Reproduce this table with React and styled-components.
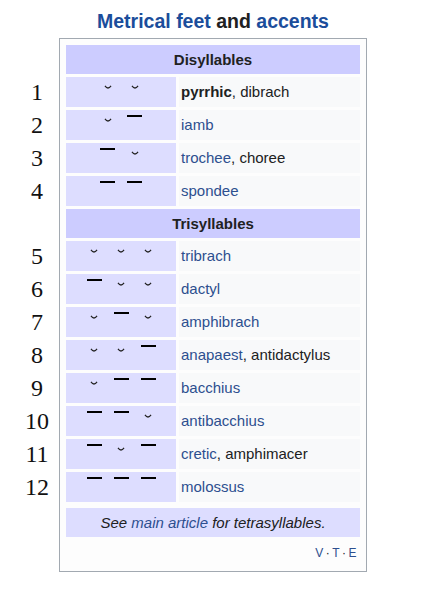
import React from 'react';
import styled, { createGlobalStyle } from 'styled-components';

const GlobalStyle = createGlobalStyle`
  body {
    margin: 0;
    background: #fff;
    font-family: 'Liberation Sans', Arial, sans-serif;
  }
`;

const feet = [
  { group: 'Disyllables' },
  { n: 1, marks: 'uu', name: [{ t: 'pyrrhic', bold: true }, { t: ', dibrach' }] },
  { n: 2, marks: 'u-', name: [{ t: 'iamb', link: true }] },
  { n: 3, marks: '-u', name: [{ t: 'trochee', link: true }, { t: ', choree' }] },
  { n: 4, marks: '--', name: [{ t: 'spondee', link: true }] },
  { group: 'Trisyllables' },
  { n: 5, marks: 'uuu', name: [{ t: 'tribrach', link: true }] },
  { n: 6, marks: '-uu', name: [{ t: 'dactyl', link: true }] },
  { n: 7, marks: 'u-u', name: [{ t: 'amphibrach', link: true }] },
  { n: 8, marks: 'uu-', name: [{ t: 'anapaest', link: true }, { t: ', antidactylus' }] },
  { n: 9, marks: 'u--', name: [{ t: 'bacchius', link: true }] },
  { n: 10, marks: '--u', name: [{ t: 'antibacchius', link: true }] },
  { n: 11, marks: '-u-', name: [{ t: 'cretic', link: true }, { t: ', amphimacer' }] },
  { n: 12, marks: '---', name: [{ t: 'molossus', link: true }] },
];

const Page = styled.div`
  display: flex;
  align-items: flex-start;
`;

const Numbers = styled.div`
  width: 59px;
  padding-top: 77px;
  padding-left: 15px;
  box-sizing: border-box;
  display: flex;
  flex-direction: column;
  gap: 3px;
`;

const Num = styled.div`
  height: ${(p) => (p.$spacer ? 29 : 30)}px;
  display: flex;
  align-items: center;
  justify-content: center;
  font-family: 'Liberation Serif', 'Times New Roman', serif;
  font-size: 24px;
  color: #111;
`;

const Column = styled.div`
  width: 308px;
`;

const Title = styled.div`
  height: 38px;
  display: flex;
  align-items: center;
  justify-content: center;
  padding-top: 4px;
  box-sizing: border-box;
  font-size: 19.5px;
  font-weight: bold;
  color: #202122;

  a {
    color: #1b4d9b;
    text-decoration: none;
  }
`;

const Box = styled.div`
  border: 1px solid #a2a9b1;
  background: #fdfdfd;
  padding: 6px;
`;

const Grid = styled.div`
  display: grid;
  grid-template-columns: 110px 1fr;
  gap: 3px;
`;

const GroupHead = styled.div`
  grid-column: 1 / -1;
  height: 29px;
  display: flex;
  align-items: center;
  justify-content: center;
  background: #ccccff;
  font-size: 15px;
  font-weight: bold;
  color: #202122;
`;

const Foot = styled.div`
  height: 30px;
  background: #ddddff;
  display: flex;
  justify-content: center;
  align-items: flex-start;
`;

const Slot = styled.div`
  width: 27px;
  display: flex;
  justify-content: center;
`;

const Long = styled.span`
  display: block;
  width: 15px;
  height: 2px;
  margin-top: 5px;
  background: #000;
`;

const Short = styled.svg`
  display: block;
  margin-top: 8px;
`;

const Name = styled.div`
  height: 30px;
  display: flex;
  align-items: center;
  padding-left: 2px;
  padding-bottom: 2px;
  box-sizing: border-box;
  background: #f8f9fa;
  font-size: 15px;
  color: #202122;
  white-space: pre;

  b {
    font-weight: bold;
  }

  a {
    color: #2d4f8f;
    text-decoration: none;
  }
`;

const SeeMore = styled.div`
  margin-top: 6px;
  height: 29px;
  display: flex;
  align-items: center;
  justify-content: center;
  background: #ddddff;
  font-size: 15px;
  font-style: italic;
  color: #202122;
  white-space: pre;

  a {
    color: #2d4f8f;
    text-decoration: none;
  }
`;

const Navbar = styled.div`
  display: flex;
  justify-content: flex-end;
  padding: 9px 2px 5px;
  font-size: 12px;
  color: #2d4f8f;
  letter-spacing: 1.5px;

  span {
    color: #202122;
    margin: 0 1px;
  }
`;

function Mark({ type }) {
  if (type === '-') return <Long />;
  return (
    <Short width="8" height="5" viewBox="0 0 8 5">
      <path d="M1 0.8 Q4 5.2 7 0.8" fill="none" stroke="#222" strokeWidth="1.3" />
    </Short>
  );
}

export default function App() {
  return (
    <Page>
      <GlobalStyle />
      <Numbers>
        {feet.map((f, i) =>
          f.group ? (
            i === 0 ? null : <Num key={i} $spacer />
          ) : (
            <Num key={i}>{f.n}</Num>
          )
        )}
      </Numbers>
      <Column>
        <Title>
          <a>Metrical feet</a>&nbsp;and&nbsp;<a>accents</a>
        </Title>
        <Box>
          <Grid>
            {feet.map((f, i) =>
              f.group ? (
                <GroupHead key={i}>{f.group}</GroupHead>
              ) : (
                <React.Fragment key={i}>
                  <Foot>
                    {f.marks.split('').map((m, j) => (
                      <Slot key={j}>
                        <Mark type={m} />
                      </Slot>
                    ))}
                  </Foot>
                  <Name>
                    {f.name.map((p, j) =>
                      p.bold ? <b key={j}>{p.t}</b> : p.link ? <a key={j}>{p.t}</a> : p.t
                    )}
                  </Name>
                </React.Fragment>
              )
            )}
          </Grid>
          <SeeMore>
            See <a>main article</a> for tetrasyllables.
          </SeeMore>
          <Navbar>
            V<span>·</span>T<span>·</span>E
          </Navbar>
        </Box>
      </Column>
    </Page>
  );
}
